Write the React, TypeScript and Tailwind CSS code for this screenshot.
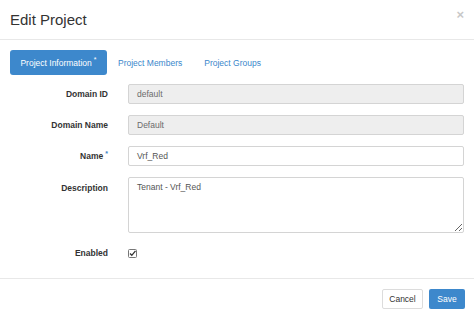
import React from 'react';

const rows = [
  { label: 'Domain ID', value: 'default', disabled: true },
  { label: 'Domain Name', value: 'Default', disabled: true },
  { label: 'Name', value: 'Vrf_Red', required: true },
];

function Label({ text, required }: { text: string; required?: boolean }) {
  return (
    <div className="w-[98px] shrink-0 text-right text-[8.5px] leading-[12px] font-bold text-[#333]">
      {text}
      {required && <span className="relative -top-[3px] ml-[2px] text-[7px] text-[#3a87cb]">*</span>}
    </div>
  );
}

export default function App() {
  return (
    <div className="h-[318px] w-[474px] overflow-hidden bg-white font-['Liberation_Sans',Arial,sans-serif] text-[#333]">
      <div className="flex h-[40px] items-center justify-between border-b border-[#e8e8e8] pl-[10px] pr-[10px]">
        <h1 className="text-[15px] leading-none text-[#333]">Edit Project</h1>
        <span className="-mt-[10px] text-[13px] font-bold leading-none text-[#c8c8c8]">×</span>
      </div>

      <div className="px-[10px] pt-[10px]">
        <div className="flex h-[25px] items-center text-[8.5px] leading-[12px]">
          <div className="flex h-[25px] w-[97px] items-center justify-center rounded-[3px] bg-[#3d88cc] pt-[1px] text-white">
            Project Information<span className="relative -top-[3px] ml-[2px] text-[7px]">*</span>
          </div>
          <span className="ml-[11px] pt-[1px] text-[#3a87cb]">Project Members</span>
          <span className="ml-[22px] pt-[1px] text-[#3a87cb]">Project Groups</span>
        </div>

        <div className="mt-[9px] flex flex-col gap-[11px]">
          {rows.map((r) => (
            <div key={r.label} className="flex h-[20px] items-center gap-[20px]">
              <Label text={r.label} required={r.required} />
              <div
                className={`flex h-[20px] w-[337px] items-center rounded-[2px] border border-[#d4d4d4] px-[8px] text-[8.5px] ${
                  r.disabled ? 'bg-[#eeeeee] text-[#6b6b6b]' : 'bg-white text-[#555]'
                }`}
              >
                {r.value}
              </div>
            </div>
          ))}

          <div className="flex items-start gap-[20px]">
            <div className="pt-[5px]">
              <Label text="Description" />
            </div>
            <textarea
              className="h-[56px] w-[337px] rounded-[2px] border border-[#d4d4d4] px-[8px] py-[3px] text-[8.5px] text-[#555] outline-none"
              defaultValue="Tenant - Vrf_Red"
            />
          </div>

          <div className="mt-[3px] flex h-[12px] items-center gap-[20px]">
            <Label text="Enabled" />
            <svg width="9" height="9" viewBox="0 0 9 9">
              <rect x="0.5" y="0.5" width="8" height="8" rx="1" fill="#fff" stroke="#777" />
              <path d="M2 4.5 L3.8 6.3 L7.5 1.8" fill="none" stroke="#333" strokeWidth="1.3" />
            </svg>
          </div>
        </div>
      </div>

      <div className="mt-[19px] flex justify-end gap-[6px] border-t border-[#e8e8e8] pr-[9px] pt-[10px]">
        <button className="h-[20px] w-[41px] rounded-[2px] border border-[#dcdcdc] bg-white text-[8.5px] text-[#333]">
          Cancel
        </button>
        <button className="h-[20px] w-[36px] rounded-[2px] bg-[#3d88cc] text-[8.5px] text-white">
          Save
        </button>
      </div>
    </div>
  );
}
